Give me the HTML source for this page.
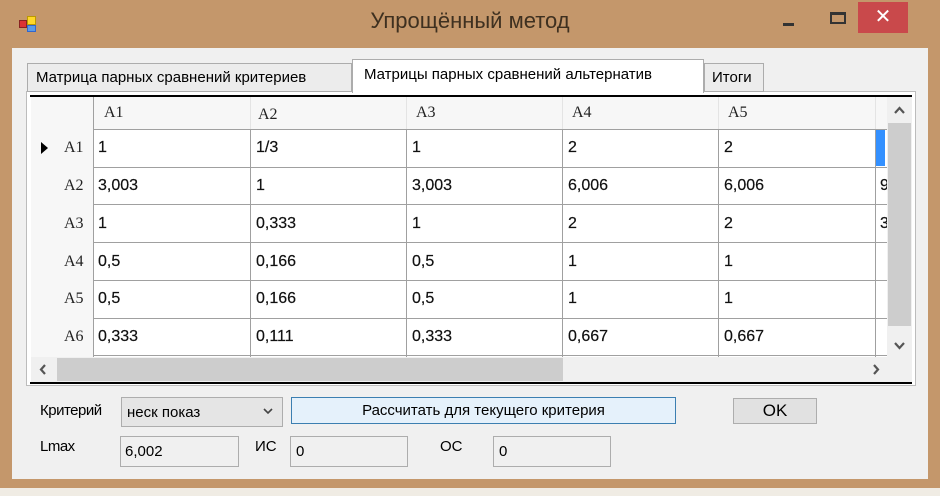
<!DOCTYPE html>
<html><head><meta charset="utf-8"><style>
*{margin:0;padding:0;box-sizing:border-box}
body{width:940px;height:496px;overflow:hidden;background:#c4976b;font-family:"Liberation Sans","DejaVu Sans",sans-serif;position:relative}
.a{position:absolute}
.t{font-size:15px;color:#000;white-space:nowrap}
.c{font-size:16px;color:#111;-webkit-text-stroke:0.2px #111}
.serif{font-family:"Liberation Serif",serif;font-size:16px;color:#222}
.hl{position:absolute;height:1px;background:#a0a0a0}
.vl{position:absolute;width:1px;background:#a0a0a0}
.box{position:absolute;background:#f0f0f0;border:1px solid #adadad}
</style></head><body>
<div class="a" style="left:17px;top:14px;width:22px;height:20px">
<div class="a" style="left:2px;top:6px;width:8px;height:8px;background:#d33;border:1px solid #822"></div>
<div class="a" style="left:10px;top:2px;width:9px;height:9px;background:#ffd728;border:1px solid #b90"></div>
<div class="a" style="left:10px;top:11px;width:9px;height:7px;background:#5a9be6;border:1px solid #36c"></div>
</div>
<div class="a" style="left:0;top:8px;width:940px;text-align:center;font-size:22px;color:#3e3020">Упрощённый метод</div>
<div class="a" style="left:783px;top:23px;width:11px;height:3px;background:#333"></div>
<div class="a" style="left:830px;top:12px;width:16px;height:12px;border:2px solid #333;border-top-width:3px"></div>
<div class="a" style="left:858px;top:2px;width:50px;height:31px;background:#c9494b;color:#fff;text-align:center;font-size:20px;line-height:30px;font-weight:bold">✕</div>
<div class="a" style="left:12px;top:48px;width:916px;height:431px;background:#f0f0f0"></div>
<div class="a" style="left:0;top:488px;width:940px;height:8px;background:#f0ece4"></div>
<div class="a" style="left:26px;top:91px;width:890px;height:295px;border:1px solid #bcbcbc;background:#fff"></div>
<div class="a t" style="left:27px;top:63px;width:325px;height:29px;border:1px solid #acacac;background:#ececec;padding:5px 0 0 8px">Матрица парных сравнений критериев</div>
<div class="a t" style="left:352px;top:59px;width:352px;height:34px;border:1px solid #acacac;border-bottom:none;background:#fff;padding:6px 0 0 11px">Матрицы парных сравнений альтернатив</div>
<div class="a t" style="left:704px;top:63px;width:60px;height:29px;border:1px solid #acacac;background:#ececec;padding:5px 0 0 7px">Итоги</div>
<div class="a" style="left:30px;top:95px;width:882px;height:2px;background:#000"></div>
<div class="a" style="left:30px;top:382px;width:882px;height:2px;background:#000"></div>
<div class="a" style="left:31px;top:97px;width:856px;height:32px;background:#f7f7f7"></div>
<div class="a" style="left:31px;top:129px;width:62px;height:228px;background:#f7f7f7"></div>
<div class="a" style="left:876px;top:130px;width:9px;height:36px;background:#3390ff"></div>
<div class="hl" style="left:93px;top:129px;width:794px"></div>
<div class="hl" style="left:93px;top:167px;width:794px"></div>
<div class="hl" style="left:93px;top:204px;width:794px"></div>
<div class="hl" style="left:93px;top:242px;width:794px"></div>
<div class="hl" style="left:93px;top:280px;width:794px"></div>
<div class="hl" style="left:93px;top:318px;width:794px"></div>
<div class="hl" style="left:93px;top:355px;width:794px"></div>
<div class="vl" style="left:93px;top:97px;height:260px"></div>
<div class="vl" style="left:250px;top:129px;height:228px"></div>
<div class="vl" style="left:406px;top:129px;height:228px"></div>
<div class="vl" style="left:562px;top:129px;height:228px"></div>
<div class="vl" style="left:718px;top:129px;height:228px"></div>
<div class="vl" style="left:875px;top:129px;height:228px"></div>
<div class="vl" style="left:250px;top:97px;height:32px;background:#e4e4e4"></div>
<div class="vl" style="left:406px;top:97px;height:32px;background:#e4e4e4"></div>
<div class="vl" style="left:562px;top:97px;height:32px;background:#e4e4e4"></div>
<div class="vl" style="left:718px;top:97px;height:32px;background:#e4e4e4"></div>
<div class="vl" style="left:875px;top:97px;height:32px;background:#e4e4e4"></div>
<div class="a serif" style="left:104px;top:104px">A1</div>
<div class="a serif" style="left:258px;top:106px">A2</div>
<div class="a serif" style="left:416px;top:104px">A3</div>
<div class="a serif" style="left:572px;top:104px">A4</div>
<div class="a serif" style="left:728px;top:104px">A5</div>
<div class="a" style="left:41px;top:142px;width:0;height:0;border-left:7px solid #000;border-top:6px solid transparent;border-bottom:6px solid transparent"></div>
<div class="a serif" style="left:64px;top:139px">A1</div>
<div class="a serif" style="left:64px;top:177px">A2</div>
<div class="a serif" style="left:64px;top:215px">A3</div>
<div class="a serif" style="left:64px;top:253px">A4</div>
<div class="a serif" style="left:64px;top:290px">A5</div>
<div class="a serif" style="left:64px;top:328px">A6</div>
<div class="a t c" style="left:98px;top:139px">1</div><div class="a t c" style="left:256px;top:139px">1/3</div><div class="a t c" style="left:412px;top:139px">1</div><div class="a t c" style="left:568px;top:139px">2</div><div class="a t c" style="left:724px;top:139px">2</div>
<div class="a t c" style="left:98px;top:177px">3,003</div><div class="a t c" style="left:256px;top:177px">1</div><div class="a t c" style="left:412px;top:177px">3,003</div><div class="a t c" style="left:568px;top:177px">6,006</div><div class="a t c" style="left:724px;top:177px">6,006</div><div class="a t c" style="left:880px;top:177px">9</div>
<div class="a t c" style="left:98px;top:215px">1</div><div class="a t c" style="left:256px;top:215px">0,333</div><div class="a t c" style="left:412px;top:215px">1</div><div class="a t c" style="left:568px;top:215px">2</div><div class="a t c" style="left:724px;top:215px">2</div><div class="a t c" style="left:880px;top:215px">3</div>
<div class="a t c" style="left:98px;top:253px">0,5</div><div class="a t c" style="left:256px;top:253px">0,166</div><div class="a t c" style="left:412px;top:253px">0,5</div><div class="a t c" style="left:568px;top:253px">1</div><div class="a t c" style="left:724px;top:253px">1</div>
<div class="a t c" style="left:98px;top:290px">0,5</div><div class="a t c" style="left:256px;top:290px">0,166</div><div class="a t c" style="left:412px;top:290px">0,5</div><div class="a t c" style="left:568px;top:290px">1</div><div class="a t c" style="left:724px;top:290px">1</div>
<div class="a t c" style="left:98px;top:328px">0,333</div><div class="a t c" style="left:256px;top:328px">0,111</div><div class="a t c" style="left:412px;top:328px">0,333</div><div class="a t c" style="left:568px;top:328px">0,667</div><div class="a t c" style="left:724px;top:328px">0,667</div>
<div class="a" style="left:887px;top:97px;width:25px;height:260px;background:#f0f0f0"></div>
<div class="a" style="left:888px;top:123px;width:23px;height:203px;background:#cdcdcd"></div>
<svg class="a" style="left:887px;top:97px" width="25" height="260"><path d="M8 16 L12.5 11 L17 16" fill="none" stroke="#555" stroke-width="2.2"/><path d="M8 246 L12.5 251 L17 246" fill="none" stroke="#555" stroke-width="2.2"/></svg>
<div class="a" style="left:31px;top:357px;width:881px;height:25px;background:#f0f0f0"></div>
<div class="a" style="left:57px;top:358px;width:506px;height:23px;background:#cdcdcd"></div>
<svg class="a" style="left:31px;top:357px" width="881" height="25"><path d="M14 8 L10 12.5 L14 17" fill="none" stroke="#555" stroke-width="2.2"/><path d="M843 8 L847 12.5 L843 17" fill="none" stroke="#555" stroke-width="2.2"/></svg>
<div class="a t" style="left:40px;top:402px;letter-spacing:-0.5px">Критерий</div>
<div class="box" style="left:121px;top:397px;width:162px;height:30px;background:#e5e5e5"></div>
<div class="a t" style="left:127px;top:404px">неск показ</div>
<svg class="a" style="left:262px;top:406px" width="12" height="10"><path d="M2 3 L6 7 L10 3" fill="none" stroke="#444" stroke-width="1.6"/></svg>
<div class="box" style="left:291px;top:397px;width:385px;height:27px;background:#e5f1fb;border-color:#3c7fb1"></div>
<div class="a t" style="left:291px;top:402px;width:385px;text-align:center">Рассчитать для текущего критерия</div>
<div class="box" style="left:733px;top:398px;width:84px;height:26px;background:#e1e1e1"></div>
<div class="a t" style="left:733px;top:401px;width:84px;text-align:center;font-size:17px">OK</div>
<div class="a t" style="left:40px;top:438px;letter-spacing:-0.5px">Lmax</div>
<div class="box" style="left:120px;top:436px;width:119px;height:31px"></div>
<div class="a t" style="left:125px;top:443px">6,002</div>
<div class="a t" style="left:255px;top:438px">ИС</div>
<div class="box" style="left:290px;top:436px;width:118px;height:31px"></div>
<div class="a t" style="left:296px;top:443px">0</div>
<div class="a t" style="left:440px;top:438px">ОС</div>
<div class="box" style="left:493px;top:436px;width:118px;height:31px"></div>
<div class="a t" style="left:499px;top:443px">0</div>
</body></html>
